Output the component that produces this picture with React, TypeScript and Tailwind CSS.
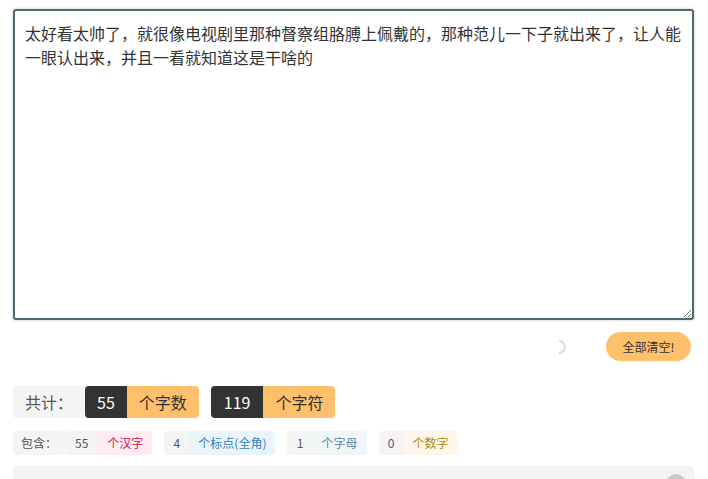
import React from 'react'

const text =
  '太好看太帅了，就很像电视剧里那种督察组胳膊上佩戴的，那种范儿一下子就出来了，让人能一眼认出来，并且一看就知道这是干啥的'

const details = [
  { num: '55', label: '个汉字', cls: 'bg-[#ffebf0] text-[#d81b4a]' },
  { num: '4', label: '个标点(全角)', cls: 'bg-[#eaf4fb] text-[#2f7dbf]' },
  { num: '1', label: '个字母', cls: 'bg-[#f0f5f7] text-[#5a8aa3]' },
  { num: '0', label: '个数字', cls: 'bg-[#fff6ea] text-[#b8860b]' },
]

export default function App() {
  return (
    <div
      className="w-[708px] h-[479px] overflow-hidden bg-white px-[13px] pt-[9px] text-[#333]"
      style={{ fontFamily: '"Noto Sans CJK SC", "Liberation Sans", sans-serif' }}
    >
      {/* 输入框 */}
      <textarea
        defaultValue={text}
        className="block w-[681px] h-[311px] rounded-[3px] border-2 border-[#4f6a70] px-[10px] py-[10px] text-base leading-6 text-[#333] shadow-[0_0_2px_1px_rgba(0,0,0,0.12)] outline-none resize-y"
      />

      {/* 操作 */}
      <div className="flex items-center justify-end gap-10 mt-3 pr-[4px]">
        <svg width="14" height="14" viewBox="0 0 14 14" className="mt-[1px]">
          <path d="M7 1 A6 6 0 0 1 7 13" fill="none" stroke="#dcdcdc" strokeWidth="2" />
        </svg>
        <button className="h-[29px] w-[85px] rounded-full bg-[#ffc06b] text-xs text-[#333]">全部清空!</button>
      </div>

      {/* 统计 */}
      <div className="flex items-center mt-[25px] h-8 text-base">
        <div className="h-full flex items-center px-3 bg-[#f4f4f4] text-[#555] rounded-l">共计：</div>
        <div className="flex h-full rounded overflow-hidden">
          <span className="flex items-center px-3 bg-[#333] text-white">55</span>
          <span className="flex items-center px-3 bg-[#ffc06b] text-[#333]">个字数</span>
        </div>
        <div className="flex h-full rounded overflow-hidden ml-3">
          <span className="flex items-center px-[13px] bg-[#333] text-white">119</span>
          <span className="flex items-center px-3 bg-[#ffc06b] text-[#333]">个字符</span>
        </div>
      </div>

      <div className="flex items-center mt-[13px] h-6 text-xs">
        <div className="h-full flex items-center px-[8px] bg-[#f4f4f4] text-[#555] rounded">包含：</div>
        {details.map((d, i) => (
          <div key={i} className={`flex h-full rounded overflow-hidden ${i === 0 ? '' : 'ml-3'}`}>
            <span
              className={`flex items-center justify-center bg-[#f4f4f4] text-[#556] ${
                d.num.length > 1 ? 'px-[10px]' : 'w-[25px]'
              }`}
            >
              {d.num}
            </span>
            <span className={`flex items-center px-[9px] ${d.cls}`}>{d.label}</span>
          </div>
        ))}
      </div>

      {/* 结果面板 */}
      <div className="relative mt-[11px] h-12 w-[681px] rounded bg-[#f4f4f4]">
        <div className="absolute right-2 top-2 h-5 w-5 rounded-full bg-[#c8c8c8]" />
      </div>
    </div>
  )
}
